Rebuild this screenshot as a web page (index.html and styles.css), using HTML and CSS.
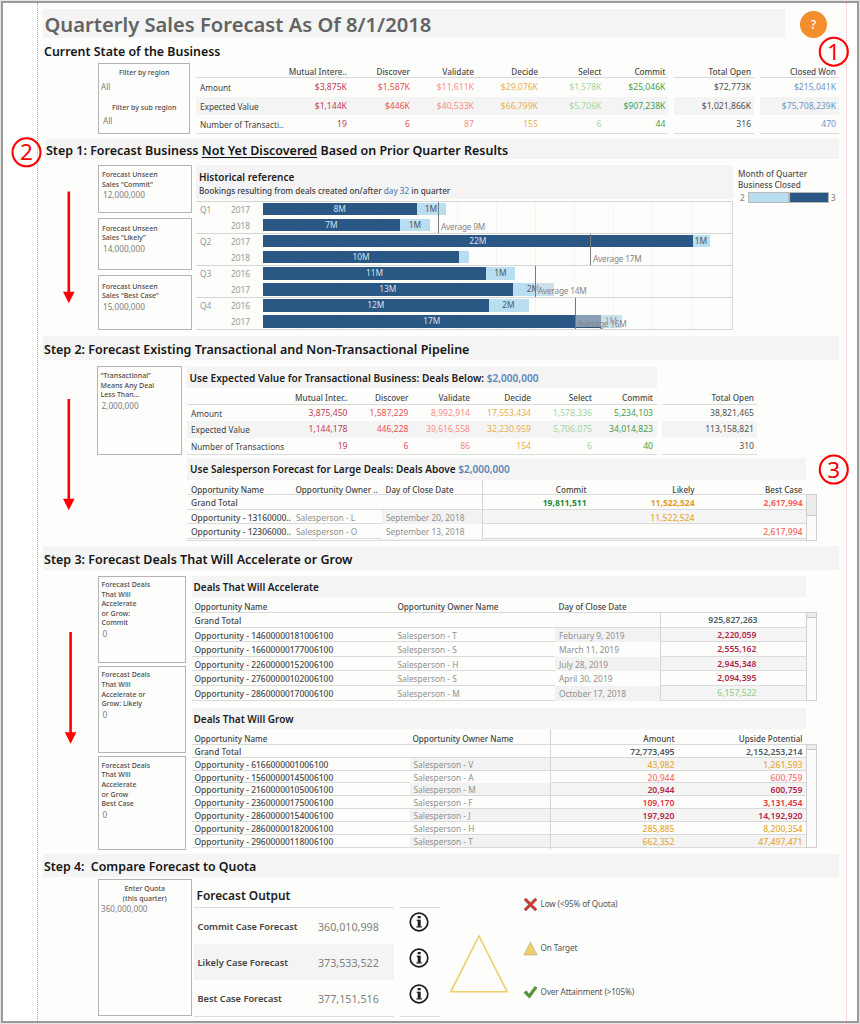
FILE: index.html
```
<!DOCTYPE html>
<html lang="en">
<head>
<meta charset="utf-8">
<title>Quarterly Sales Forecast</title>
<link rel="stylesheet" href="styles.css">
</head>
<body>
<div class="frame">
<main class="sheet">
  <header class="title-row">
    <h1>Quarterly Sales Forecast As Of 8/1/2018</h1>
    <span class="help">?</span>
  </header>
  <h2 class="plain">Current State of the Business</h2>

  <section class="current">
    <div class="box filters">
      <p>Filter by region</p><span>All</span>
      <p>Filter by sub region</p><span class="in">All</span>
    </div>
    <div class="stages">
      <div class="r head"><span></span><span>Mutual Intere..</span><span>Discover</span><span>Validate</span><span>Decide</span><span>Select</span><span>Commit</span></div>
      <div class="r"><b>Amount</b><span class="c1">$3,875K</span><span class="c2">$1,587K</span><span class="c3">$11,611K</span><span class="c4">$29,076K</span><span class="c5">$1,578K</span><span class="c6">$25,046K</span></div>
      <div class="r alt"><b>Expected Value</b><span class="c1">$1,144K</span><span class="c2">$446K</span><span class="c3">$40,533K</span><span class="c4">$66,799K</span><span class="c5">$5,706K</span><span class="c6">$907,238K</span></div>
      <div class="r"><b>Number of Transacti..</b><span class="c1">19</span><span class="c2">6</span><span class="c3">87</span><span class="c4">155</span><span class="c5">6</span><span class="c6">44</span></div>
    </div>
    <div class="stages single open">
      <div class="r head"><span>Total Open</span></div>
      <div class="r"><span>$72,773K</span></div>
      <div class="r alt"><span>$1,021,866K</span></div>
      <div class="r"><span>316</span></div>
    </div>
    <div class="stages single won">
      <div class="r head"><span>Closed Won</span></div>
      <div class="r"><span>$215,041K</span></div>
      <div class="r alt"><span>$75,708,239K</span></div>
      <div class="r"><span>470</span></div>
    </div>
  </section>

  <h2 class="bar s1">Step 1: Forecast Business <u>Not Yet Discovered</u> Based on Prior Quarter Results</h2>
  <section class="step1">
    <div class="boxes">
      <div class="box"><p>Forecast Unseen<br>Sales “Commit”</p><span>12,000,000</span></div>
      <div class="box"><p>Forecast Unseen<br>Sales “Likely”</p><span>14,000,000</span></div>
      <div class="box"><p>Forecast Unseen<br>Sales “Best Case”</p><span>15,000,000</span></div>
    </div>
    <div class="history">
      <div class="history-head"><h3>Historical reference</h3><p>Bookings resulting from deals created on/after <em>day 32</em> in quarter</p></div>
      <div class="chart">
        <div class="group">
          <div class="line"><i>Q1</i><i>2017</i><div class="bars"><span class="dk" style="width:153.5px">8M</span><span class="lt" style="width:29px">1M</span></div></div>
          <div class="line"><i></i><i>2018</i><div class="bars"><span class="dk" style="width:137px">7M</span><span class="lt" style="width:30px">1M</span></div></div>
          <div class="avg" style="left:242px">Average 9M</div>
        </div>
        <div class="group">
          <div class="line"><i>Q2</i><i>2017</i><div class="bars"><span class="dk" style="width:429.5px">22M</span><span class="lt" style="width:17px">1M</span></div></div>
          <div class="line"><i></i><i>2018</i><div class="bars"><span class="dk" style="width:196px">10M</span><span class="lt" style="width:10px"></span></div></div>
          <div class="avg" style="left:394px">Average 17M</div>
        </div>
        <div class="group">
          <div class="line"><i>Q3</i><i>2016</i><div class="bars"><span class="dk" style="width:223px">11M</span><span class="lt" style="width:29px">1M</span></div></div>
          <div class="line"><i></i><i>2017</i><div class="bars"><span class="dk" style="width:249.5px">13M</span><span class="lt" style="width:41px">2M</span></div></div>
          <div class="avg veil light" style="left:339px">Average 14M</div>
        </div>
        <div class="group">
          <div class="line"><i>Q4</i><i>2016</i><div class="bars"><span class="dk" style="width:225.5px">12M</span><span class="lt" style="width:40px">2M</span></div></div>
          <div class="line"><i></i><i>2017</i><div class="bars"><span class="dk" style="width:337.5px">17M</span><span class="lt" style="width:21px">1M</span></div></div>
          <div class="avg veil" style="left:379px">Average 16M</div>
        </div>
      </div>
    </div>
    <div class="key">
      <p>Month of Quarter<br>Business Closed</p>
      <div><i>2</i><span class="k2"></span><span class="k3"></span><i>3</i></div>
    </div>
  </section>

  <h2 class="bar s2">Step 2: Forecast Existing Transactional and Non-Transactional Pipeline</h2>
  <section class="step2">
    <div class="box"><p>“Transactional”<br>Means Any Deal<br>Less Than...</p><span>2,000,000</span></div>
    <div class="pipeline">
      <div class="pair">
        <div>
          <h3 class="sub">Use Expected Value for Transactional Business: Deals Below: <em>$2,000,000</em></h3>
          <div class="stages two">
            <div class="r head"><span></span><span>Mutual Inter..</span><span>Discover</span><span>Validate</span><span>Decide</span><span>Select</span><span>Commit</span></div>
            <div class="r"><b>Amount</b><span class="c1">3,875,450</span><span class="c2">1,587,229</span><span class="c3">8,992,914</span><span class="c4">17,553,434</span><span class="c5">1,578,336</span><span class="c6">5,234,103</span></div>
            <div class="r alt"><b>Expected Value</b><span class="c1">1,144,178</span><span class="c2">446,228</span><span class="c3">39,616,558</span><span class="c4">32,230,959</span><span class="c5">5,706,075</span><span class="c6">34,014,823</span></div>
            <div class="r"><b>Number of Transactions</b><span class="c1">19</span><span class="c2">6</span><span class="c3">86</span><span class="c4">154</span><span class="c5">6</span><span class="c6">40</span></div>
          </div>
        </div>
        <div class="stages two single open">
          <div class="r head"><span>Total Open</span></div>
          <div class="r"><span>38,821,465</span></div>
          <div class="r alt"><span>113,158,821</span></div>
          <div class="r"><span>310</span></div>
        </div>
      </div>
      <h3 class="sub wide">Use Salesperson Forecast for Large Deals: Deals Above <em>$2,000,000</em></h3>
      <div class="scroller">
        <div class="deals large">
          <div class="r head"><b>Opportunity Name</b><b>Opportunity Owner ..</b><b>Day of Close Date</b><span>Commit</span><span>Likely</span><span>Best Case</span></div>
          <div class="r total"><b>Grand Total</b><i></i><i></i><span class="g">19,811,511</span><span class="y">11,522,524</span><span class="p">2,617,994</span></div>
          <div class="r alt"><b>Opportunity - 13160000..</b><i>Salesperson - L</i><i class="fill">September 20, 2018</i><span></span><span class="y">11,522,524</span><span></span></div>
          <div class="r"><b>Opportunity - 12306000..</b><i>Salesperson - O</i><i class="fill">September 13, 2018</i><span></span><span></span><span class="p">2,617,994</span></div>
          <div class="r alt rest"><b></b><i></i><i class="fill"></i><span></span><span></span><span></span></div>
        </div>
        <div class="track t1"><span></span></div>
      </div>
    </div>
  </section>

  <h2 class="bar s3">Step 3: Forecast Deals That Will Accelerate or Grow</h2>
  <section class="step3">
    <div class="boxes">
      <div class="box"><p>Forecast Deals<br>That Will<br>Accelerate<br>or Grow:<br>Commit</p><span>0</span></div>
      <div class="box"><p>Forecast Deals<br>That Will<br>Accelerate or<br>Grow: Likely</p><span>0</span></div>
      <div class="box"><p>Forecast Deals<br>That Will<br>Accelerate<br>or Grow<br>Best Case</p><span>0</span></div>
    </div>
    <div class="lists">
      <h3 class="sub">Deals That Will Accelerate</h3>
      <div class="scroller">
        <div class="deals accel">
          <div class="r head"><b>Opportunity Name</b><b>Opportunity Owner Name</b><b>Day of Close Date</b><span></span></div>
          <div class="r total"><b>Grand Total</b><i></i><i></i><span>925,827,263</span></div>
          <div class="r alt"><b>Opportunity - 14600000181006100</b><i>Salesperson - T</i><i class="fill">February 9, 2019</i><span class="m">2,220,059</span></div>
          <div class="r"><b>Opportunity - 16600000177006100</b><i>Salesperson - S</i><i class="fill">March 11, 2019</i><span class="m">2,555,162</span></div>
          <div class="r alt"><b>Opportunity - 22600000152006100</b><i>Salesperson - H</i><i class="fill">July 28, 2019</i><span class="m">2,945,348</span></div>
          <div class="r"><b>Opportunity - 27600000102006100</b><i>Salesperson - S</i><i class="fill">April 30, 2019</i><span class="m">2,094,395</span></div>
          <div class="r alt"><b>Opportunity - 28600000170006100</b><i>Salesperson - M</i><i class="fill">October 17, 2018</i><span class="l">6,157,522</span></div>
        </div>
        <div class="track t2"><span></span></div>
      </div>
      <h3 class="sub grow-head">Deals That Will Grow</h3>
      <div class="scroller">
        <div class="deals grow">
          <div class="r head"><b>Opportunity Name</b><b>Opportunity Owner Name</b><span>Amount</span><span>Upside Potential</span></div>
          <div class="r total"><b>Grand Total</b><i></i><span>72,773,495</span><span>2,152,253,214</span></div>
          <div class="r alt"><b>Opportunity - 6166000001006100</b><i class="fill">Salesperson - V</i><span class="y">43,982</span><span class="y">1,261,593</span></div>
          <div class="r"><b>Opportunity - 15600000145006100</b><i class="fill">Salesperson - A</i><span class="p2">20,944</span><span class="p2">600,759</span></div>
          <div class="r alt"><b>Opportunity - 21600000105006100</b><i class="fill">Salesperson - M</i><span class="m">20,944</span><span class="m">600,759</span></div>
          <div class="r"><b>Opportunity - 23600000175006100</b><i class="fill">Salesperson - F</i><span class="rd">109,170</span><span class="rd">3,131,454</span></div>
          <div class="r alt"><b>Opportunity - 28600000154006100</b><i class="fill">Salesperson - J</i><span class="m">197,920</span><span class="m">14,192,920</span></div>
          <div class="r"><b>Opportunity - 28600000182006100</b><i class="fill">Salesperson - H</i><span class="y">285,885</span><span class="y">8,200,354</span></div>
          <div class="r alt"><b>Opportunity - 29600000118006100</b><i class="fill">Salesperson - T</i><span class="y">662,352</span><span class="y">47,497,471</span></div>
        </div>
        <div class="track t3"><span></span></div>
      </div>
    </div>
  </section>

  <h2 class="bar s4">Step 4:&nbsp; Compare Forecast to Quota</h2>
  <section class="step4">
    <div class="box quota"><p>Enter Quota<br>(this quarter)</p><span>360,000,000</span></div>
    <div class="output">
      <h3>Forecast Output</h3>
      <div class="r"><b>Commit Case Forecast</b><span>360,010,998</span></div>
      <div class="r alt"><b>Likely Case Forecast</b><span>373,533,522</span></div>
      <div class="r"><b>Best Case Forecast</b><span>377,151,516</span></div>
    </div>
    <div class="infos">
      <svg viewBox="0 0 20 20"><circle cx="10" cy="10" r="8.8"/><path d="M10.200 3.900v2.300M10.200 7.800v6.800"/><path class="serif" d="M7.800 8.300h2.400M7.400 14.900h5.400"/></svg>
      <svg viewBox="0 0 20 20"><circle cx="10" cy="10" r="8.8"/><path d="M10.200 3.900v2.300M10.200 7.800v6.800"/><path class="serif" d="M7.800 8.300h2.400M7.400 14.900h5.400"/></svg>
      <svg viewBox="0 0 20 20"><circle cx="10" cy="10" r="8.8"/><path d="M10.200 3.900v2.300M10.200 7.800v6.800"/><path class="serif" d="M7.800 8.300h2.400M7.400 14.900h5.400"/></svg>
    </div>
    <svg class="triangle" viewBox="0 0 60 60"><path d="M30 2 58.2 57.8H1.8Z"/></svg>
    <div class="status">
      <div><svg viewBox="0 0 16 16"><path d="M2 2 14 14M14 2 2 14" fill="none" stroke="#8d6660" stroke-width="3.2"/><path d="M2 2 14 14M14 2 2 14" fill="none" stroke="#dc3027" stroke-width="2"/></svg>Low (&lt;95% of Quota)</div>
      <div><svg viewBox="0 0 16 16"><path d="M8 1.2 15 14.8H1Z" fill="#f0d06c" stroke="#b9a878" stroke-width=".7"/></svg>On Target</div>
      <div><svg viewBox="0 0 16 16"><path d="M1 8.2 3.6 6.2 6.4 9.8 12.6 1.6 15 3 6.9 14.2Z" fill="#4c9c2a" stroke="#66805c" stroke-width=".7"/></svg>Over Attainment (&gt;105%)</div>
    </div>
  </section>
</main>
</div>

<svg class="notes" viewBox="0 0 860 1024">
  <g class="arrows">
    <path d="M68.800 191.500V294M68.800 399V501M70.600 632V735"/>
    <path class="tip" d="M63 291.800h11.600l-5.800 11.400zM63 498.800h11.600l-5.800 11.400zM64.800 732.300h11.600l-5.800 11.400z"/>
  </g>
  <g class="rings"><circle cx="833.800" cy="51.700" r="14"/><circle cx="26.500" cy="152.300" r="14"/><circle cx="833.800" cy="469.500" r="14"/></g>
  <text x="833.800" y="59.500">1</text><text x="26.500" y="160.300">2</text><text x="833.800" y="477.700">3</text>
</svg>
</body>
</html>
```
FILE: styles.css
```
* { box-sizing: border-box; margin: 0; padding: 0; }
body {
  width: 860px; height: 1024px; position: relative; overflow: hidden;
  background: #e4e4e4;
  font: 500 8.2px/1 "Noto Sans", "Open Sans", sans-serif;
  color: #505050; white-space: nowrap;
}
.frame { margin: 1px; width: 858px; height: 1022px; border: 2.500px solid #9b9c9a; background: #fff; padding-left: 34px; }
.sheet {
  width: 810px; height: 100%; background: #fdfdfb; padding: 6px 7px 0 5px;
  border-left: 1px dotted #a9a9a9; border-right: 1px dotted #f6bcbc;
}
i, em { font-style: normal; }
b { font-weight: 500; }
em { color: #5b86b4; }

/* headings */
.title-row { display: flex; justify-content: space-between; height: 28px; }
h1 { width: 742px; height: 29px; padding-left: 1.500px; background: #f4f4f4; color: #636363; font-size: 20.170px; font-weight: 600; line-height: 30px; }
.help { width: 27px; height: 27px; margin: 2px 12px 0 0; border-radius: 50%; background: #f28e2b; color: #fff; font-size: 12px; line-height: 27px; text-align: center; }
h2 { color: #161616; font-size: 12.530px; font-weight: 620; }
h2.plain { height: 26px; line-height: 29px; padding-left: 1px; font-size: 12.420px; }
.bar { background: #f4f4f4; padding-left: 1px; }
.s1 { margin: 5px 0 0 2px; height: 20px; line-height: 23px; font-size: 12.490px; }
.s1 u { text-decoration-thickness: 1px; text-underline-offset: 2px; }
.s2 { height: 24px; line-height: 27px; margin-top: 6px; }
.s3 { height: 24px; line-height: 27px; margin-top: 5px; }
.s4 { height: 23px; line-height: 25px; margin-top: 4px; font-size: 12.350px; }
h3 { color: #1c1c1c; font-size: 9.950px; font-weight: 620; }
.sub { height: 21px; line-height: 23px; padding-left: 2px; background: #f4f4f4; }

/* parameter boxes */
.box { border: 1px solid #b4b4b8; padding: 4px 3px; font-size: 7.000px; line-height: 9.600px; color: #4c4c4c; }
.box span { display: block; font-size: 8.200px; line-height: 12px; color: #808080; font-weight: 400; padding-left: 1px; }

/* stage tables */
.stages { border-bottom: 1px solid #dcdcdc; }
.stages .r { display: grid; grid-template-columns: 91px 60px 63px 64px 64px 63.500px 64px; height: 18.500px; line-height: 19px; font-size: 8.600px; font-weight: 400; }
.stages .r span { text-align: right; }
.stages .r b { padding-left: 4px; font-size: 8.250px; font-weight: 450; color: #404040; }
.stages .head, .stages .r.head span { font-size: 8.200px; font-weight: 500; color: #4c4c4c; }
.stages .r.head { height: 15px; line-height: 17px; border-bottom: 1px solid #d9d9d9; }
.alt { background: #f4f4f4; }
.stages.single .r { grid-template-columns: 1fr; padding-right: 3px; }
.won .r:not(.head) { color: #6e96c4; }
.c1 { color: #c23a56; } .c2 { color: #ee5052; } .c3 { color: #fc8c88; }
.c4 { color: #e8b04c; } .c5 { color: #a5d5a2; } .c6 { color: #3f9f52; }

.current { display: flex; padding-left: 55px; height: 71px; }
.filters { width: 92.500px; text-align: center; padding: 4px 2px; margin-right: 5.500px; }
.filters span { text-align: left; padding: 0; height: 25px; line-height: 17px; }
.filters span.in { padding-left: 2px; height: 14px; }
.current .stages { width: 472px; }
.current .stages .r:nth-child(3) { height: 18px; }
.current .open { width: 80.500px; margin-left: 6px; }
.current .won { width: 79px; margin-left: 6px; }

/* step 1 */
.step1 { display: flex; padding: 5.500px 0 0 55px; height: 171px; }
.step1 .boxes { width: 93.500px; margin-right: 4.500px; display: grid; grid-template-rows: 48.500px 52px 55px; row-gap: 5px; }
.step1 .box { padding-top: 4.500px; }
.step1 .box:last-child { padding-top: 5.500px; }
.history { width: 537px; }
.history-head { background: #f4f4f4; height: 34px; margin-bottom: 2px; padding: 5px 3px; font-size: 8.170px; line-height: 13px; }
.history-head h3 { line-height: 15px; font-size: 9.950px; }
.history-head p { color: #404040; line-height: 11px; }
.chart {
  height: 129.500px; border: solid #d5d5d5; border-width: 1px 1px 0 0;
  background: repeating-linear-gradient(90deg, transparent 0 38px, #f5f5f5 38px 39px) 67px 0 no-repeat;
}
.group { position: relative; height: 32.200px; border-bottom: 1px solid #d5d5d5; }
.line { display: grid; grid-template-columns: 31px 36px 1fr; height: 16.050px; align-items: center; color: #969696; font-size: 8.400px; font-weight: 400; }
.line > i { padding-left: 4px; line-height: 16px; }
.bars { display: flex; height: 12.300px; margin-top: -1px; line-height: 12.500px; text-align: center; }
.dk { background: #2a5783; color: #d5e0ea; }
.lt { background: #b9ddf1; color: #4b5963; }
.avg { position: absolute; top: 0; bottom: 0; border-left: 1px solid #777b80; color: #858585; font-weight: 400; font-size: 8.250px; letter-spacing: -.2px; line-height: 12px; padding: 19.500px 0 0 2px; }
.veil { background: linear-gradient(rgba(225, 229, 233, .5) 0 0) 0 17px / 46px 12px no-repeat; }
.light { background-size: 18px 12px; }
.key { margin-left: 5px; font-size: 8.200px; line-height: 11.300px; padding-top: 3.500px; }
.key div { display: flex; align-items: center; height: 12px; margin-top: 1px; color: #888; }
.key i { width: 10px; padding-left: 2px; }
.key span { width: 40.500px; height: 11.500px; border: 1px solid #b9b9b9; }
.k2 { background: #b9ddf1; } .k3 { background: #2a5783; }

/* step 2 */
.step2 { display: flex; height: 181px; padding: 6px 0 0 53.500px; }
.step2 > .box { width: 85px; height: 89px; margin-right: 5.500px; padding: 4px 3px; }
.step2 .pair { display: flex; height: 92px; padding-top: .5px; }
.pair .sub { width: 469.500px; padding-left: 2.500px; font-size: 10.080px; }
.stages.two .r { grid-template-columns: 100px 60.500px 61px 61.500px 61px 61px 61px; height: 16.600px; line-height: 17px; }
.stages.two .r.head { height: 17px; line-height: 20px; }
.two.open { width: 95px; margin: 21px 0 0 5.500px; }
.pair .two { height: 67.500px; }
.stages.two.single .r { grid-template-columns: 1fr; }
.sub.wide { width: 618.500px; padding-left: 3px; font-size: 10.030px; height: 21.500px; }

/* deal lists */
.scroller { display: flex; align-items: flex-end; }
.deals .r { display: grid; border-bottom: 1px solid #dadada; height: 14.650px; line-height: 15px; }
.deals .r span { text-align: right; font-weight: 500; font-size: 8.650px; }
.deals .r > b { padding-left: 3px; font-size: 8.450px; font-weight: 500; color: #4a4a4a; }
.deals .head > b, .deals .r.head span { font-size: 8.100px; color: #444; font-weight: 500; }
.deals i { color: #909090; font-weight: 400; font-size: 8.350px; padding-left: 4px; }
.fill { background: #fdfdfb; }
.alt .fill { background: #f2f2f2; }
.deals .alt { background: linear-gradient(#f4f4f4 0 0) right / 147px 100% no-repeat; }
.deals .total span { font-weight: 600; color: #4e5a66; }
.deals .r .m { color: #b3274b; font-weight: 600; } .deals .r .rd { color: #e0343d; font-weight: 600; }
.deals .r .y { color: #e5a93a; } .deals .r .p { color: #f2655f; } .deals .r .p2 { color: #f5736e; } .deals .r .l { color: #94d190; } .deals .r .g { color: #208a3a; }
.large { width: 618.500px; }
.large .r { grid-template-columns: 104.500px 90px 100px 105px 108px 108px; }
.large .r > :nth-child(4), .grow .r > :nth-child(3), .accel .r:not(.head) > :nth-child(4) { border-left: 1px solid #d5d5d5; }
.deals.large .r > b { padding-left: 4px; }
.deals.large .r > i { padding-left: 4.500px; }
.deals.large .r { line-height: 16px; }
.deals.large .r.head { height: 15px; line-height: 19px; }
.deals.large .r.total { height: 15px; line-height: 16px; }
.large .r.total .y { color: #e39c1e; }
.large .r.total span { font-weight: 700; font-size: 8.500px; }
.deals.large .alt { background-size: 324px 100%; }
.deals.large .rest.r { height: 2.500px; }
.track { width: 11px; border: 1px solid #cfcfcf; background: #fcfcfc; }
.track span { display: block; background: #ececec; border-bottom: 1px solid #c4c4c4; }
.t1 { height: 47px; } .t1 span { height: 21px; }
.t2 { height: 89px; } .t2 span, .t3 span { height: 5px; }
.t3 { height: 103.500px; }

/* step 3 */
.step3 { display: flex; height: 280px; padding: 5.500px 0 0 54.500px; }
.step3 .boxes { width: 88.500px; margin-right: 5.500px; display: grid; grid-template-rows: 87px 87px 94px; row-gap: 3.400px; align-content: start; }
.step3 .box { padding-top: 3.500px; }
.step3 .sub { width: 614.500px; font-size: 9.980px; margin-top: .5px; }
.accel, .grow { width: 614.500px; }
.accel .r { grid-template-columns: 202px 161px 105px 97px; }
.accel .r.head { height: 15.500px; line-height: 20px; }
.accel .head b:not(:first-child) { padding-left: 4px; }
.accel .fill { padding-left: 4.500px; }
.accel .r.total { height: 15px; }
.accel .r.total span { margin-right: -1px; }
.step3 .sub.grow-head { margin-top: 7px; }
.grow .r { grid-template-columns: 218px 140px 125px 128px; }
.deals.grow .r { height: 12.850px; line-height: 14px; }
.deals.grow .fill { height: 12px; }
.deals.grow .r.total { height: 13px; }
.deals.grow .r.head { height: 16px; line-height: 20px; }
.deals.grow .alt { background-size: 257px 100%; }

/* step 4 */
.step4 { display: flex; padding: 2px 0 0 55px; height: 140px; }
.quota { width: 93.500px; height: 137px; text-align: center; margin-right: 2.500px; }
.quota span { text-align: left; padding: 0; margin-left: -1px; }
.output { width: 200px; border-bottom: 1px solid #ddd; height: 138px; }
.output h3 { height: 29px; line-height: 32px; font-size: 11.900px; padding-left: 2.500px; border-bottom: 1px solid #ddd; }
.output .r { display: flex; height: 36px; line-height: 38px; font-size: 10.700px; color: #808080; font-weight: 400; }
.output b { width: 124px; padding-left: 3.500px; font-size: 9.250px; color: #444; font-weight: 570; }
.infos { width: 40px; height: 138px; margin-left: 6px; padding: 31px 9px 0; border-bottom: 1px solid #ddd; background: linear-gradient(#ddd 0 0) 0 28px / 100% 1px no-repeat; }
.infos svg { display: block; width: 20px; height: 20px; margin: 2px 0 15.900px; fill: none; stroke: #1c1c1c; stroke-width: 1.700; }
.infos svg + svg { margin-top: 0; }
.infos path { stroke-width: 3; }
.infos .serif { stroke-width: 1.200; }
.triangle { width: 60px; height: 60px; margin: 54.500px 0 0 8.500px; fill: none; stroke: #f1cf68; stroke-width: 1.600; }
.status { padding: 17px 0 0 14px; font-size: 8.200px; letter-spacing: -.13px; color: #555; }
.status div { display: flex; align-items: center; gap: 3px; height: 16px; margin-bottom: 28.200px; font-weight: 400; }
.status svg { width: 15px; height: 15px; }

/* callouts over the sheet */
.notes { position: absolute; left: 0; top: 0; width: 860px; height: 1024px; }
.arrows path { stroke: #f00; stroke-width: 2.600; }
.arrows .tip { fill: #f00; stroke: none; }
.rings circle { fill: none; stroke: #f00; stroke-width: 2.100; }
.notes text { fill: #f00; font: 400 22.500px "Noto Sans", sans-serif; text-anchor: middle; }
```
